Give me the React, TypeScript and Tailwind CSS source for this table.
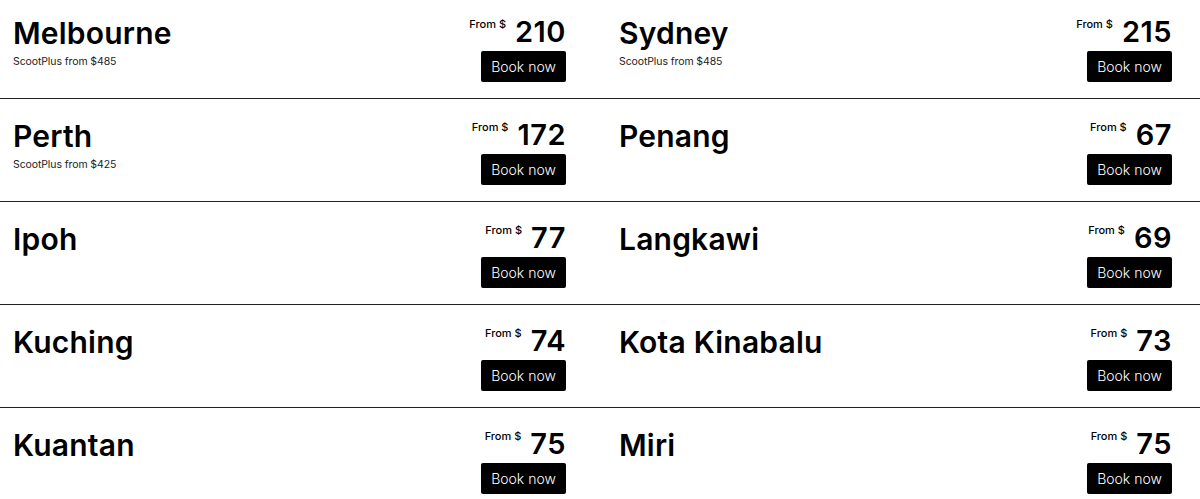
import React from "react";

type Dest = { name: string; price: number; plus?: string };

const rows: [Dest, Dest][] = [
  [
    { name: "Melbourne", price: 210, plus: "ScootPlus from $485" },
    { name: "Sydney", price: 215, plus: "ScootPlus from $485" },
  ],
  [
    { name: "Perth", price: 172, plus: "ScootPlus from $425" },
    { name: "Penang", price: 67 },
  ],
  [
    { name: "Ipoh", price: 77 },
    { name: "Langkawi", price: 69 },
  ],
  [
    { name: "Kuching", price: 74 },
    { name: "Kota Kinabalu", price: 73 },
  ],
  [
    { name: "Kuantan", price: 75 },
    { name: "Miri", price: 75 },
  ],
];

function Cell({ d }: { d: Dest }) {
  return (
    <div className="flex justify-between items-start pt-[20px]">
      <div className="flex flex-col">
        <div className="text-[30px] leading-[34px] font-semibold text-black tracking-[0.2px]">{d.name}</div>
        {d.plus && (
          <div className="text-[10.5px] leading-[12px] text-[#222] mt-[6px] tracking-[-0.1px]">{d.plus}</div>
        )}
      </div>
      <div className="flex flex-col items-end">
        <div className="flex items-start">
          <span className="text-[11px] leading-[14px] mt-[1px] mr-[9px] text-black font-medium">From $</span>
          <span className="text-[29px] leading-[31px] font-semibold text-black tracking-[0.5px]">{d.price}</span>
        </div>
        <button className="mt-[4px] h-[31px] w-[85px] bg-black text-white text-[14px] rounded-[2px] flex items-center justify-center font-light">
          Book now
        </button>
      </div>
    </div>
  );
}

export default function App() {
  return (
    <div
      className="w-[1200px] h-[499px] overflow-hidden bg-white"
      style={{ fontFamily: "Inter, 'Liberation Sans', sans-serif" }}
    >
      <div className="-mt-[4px]">
        {rows.map((r, i) => (
          <div
            key={i}
            className="h-[103px] border-b border-[#222] grid grid-cols-2 gap-x-[53px] pl-[13px] pr-[28px]"
          >
            <Cell d={r[0]} />
            <Cell d={r[1]} />
          </div>
        ))}
      </div>
    </div>
  );
}
